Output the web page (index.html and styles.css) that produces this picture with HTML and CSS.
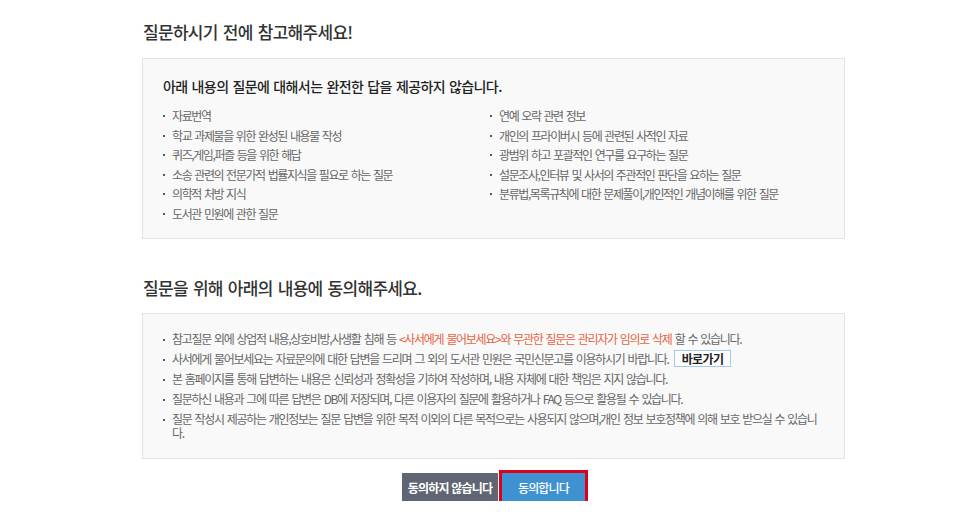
FILE: index.html
```html
<!DOCTYPE html>
<html lang="ko">
<head>
<meta charset="utf-8">
<title>질문하기 전 안내</title>
<link rel="stylesheet" href="styles.css">
</head>
<body>
<div class="wrap">
  <h2 class="title title-first">질문하시기 전에 참고해주세요!</h2>
  <div class="box box-notice">
    <h3 class="box-head">아래 내용의 질문에 대해서는 완전한 답을 제공하지 않습니다.</h3>
    <ul class="cols">
      <li class="item"><span>자료번역</span></li>
      <li class="item"><span>연예 오락 관련 정보</span></li>
      <li class="item"><span>학교 과제물을 위한 완성된 내용물 작성</span></li>
      <li class="item"><span>개인의 프라이버시 등에 관련된 사적인 자료</span></li>
      <li class="item"><span>퀴즈,게임,퍼즐 등을 위한 해답</span></li>
      <li class="item"><span>광범위 하고 포괄적인 연구를 요구하는 질문</span></li>
      <li class="item"><span>소송 관련의 전문가적 법률지식을 필요로 하는 질문</span></li>
      <li class="item"><span>설문조사,인터뷰 및 사서의 주관적인 판단을 요하는 질문</span></li>
      <li class="item"><span>의학적 처방 지식</span></li>
      <li class="item"><span>분류법,목록규칙에 대한 문제풀이,개인적인 개념이해를 위한 질문</span></li>
      <li class="item"><span>도서관 민원에 관한 질문</span></li>
    </ul>
  </div>

  <h2 class="title title-second">질문을 위해 아래의 내용에 동의해주세요.</h2>
  <div class="box box-agree">
    <ul class="rows">
      <li class="item"><span>참고질문 외에 상업적 내용,상호비방,사생활 침해 등 <em class="warn">&lt;사서에게 물어보세요&gt;와 무관한 질문은 관리자가 임의로 삭제</em> 할 수 있습니다.</span></li>
      <li class="item"><span>사서에게 물어보세요는 자료문의에 대한 답변을 드리며 그 외의 도서관 민원은 국민신문고를 이용하시기 바랍니다. <a class="go" href="#">바로가기</a></span></li>
      <li class="item"><span>본 홈페이지를 통해 답변하는 내용은 신뢰성과 정확성을 기하여 작성하며, 내용 자체에 대한 책임은 지지 않습니다.</span></li>
      <li class="item"><span>질문하신 내용과 그에 따른 답변은 DB에 저장되며, 다른 이용자의 질문에 활용하거나 FAQ 등으로 활용될 수 있습니다.</span></li>
      <li class="item"><span>질문 작성시 제공하는 개인정보는 질문 답변을 위한 목적 이외의 다른 목적으로는 사용되지 않으며,개인 정보 보호정책에 의해 보호 받으실 수 있습니다.</span></li>
    </ul>
  </div>

  <div class="actions">
    <button class="btn btn-no" type="button">동의하지 않습니다</button>
    <button class="btn btn-yes" type="button">동의합니다</button>
  </div>
</div>
</body>
</html>
```

FILE: styles.css
```css
* { box-sizing: border-box; }
html, body { margin: 0; padding: 0; background: #fff; }
body {
  font-family: "Noto Sans CJK KR", "Noto Sans", sans-serif;
  color: #666;
}
.wrap {
  width: 703px;
  margin-left: 142px;
  padding-top: 20px;
}
.title {
  margin: 0;
  font-size: 17px;
  line-height: 24px;
  font-weight: 500;
  color: #333;
  word-spacing: 1px;
  padding-left: 1px;
}
.title-first { letter-spacing: -0.7px; }
.title-second { margin-top: 37px; letter-spacing: -0.7px; }
.box {
  background: #f9f9f9;
  border: 1px solid #e3e3e3;
}
.box-notice {
  margin-top: 14px;
  padding: 17px 20px 15px 20px;
}
.box-head {
  margin: 0 0 10px 0;
  font-size: 14px;
  line-height: 20px;
  font-weight: 500;
  color: #222;
  letter-spacing: -0.6px;
  word-spacing: 0.7px;
}
ul { list-style: none; margin: 0; padding: 0; }
.cols {
  display: grid;
  grid-template-columns: 327px 1fr;
  grid-auto-flow: row;
}
.item {
  display: grid;
  grid-template-columns: 9px 1fr;
  font-size: 12px;
  letter-spacing: -1.4px;
  word-spacing: 1px;
  color: #666;
}
.item::before {
  content: "";
  width: 2px;
  height: 2px;
  background: #555;
  margin-top: 7px;
}
.cols .item { line-height: 19.5px; }
.cols .item::before { margin-top: 9px; }
.box-agree {
  margin-top: 13px;
  padding: 18px 26px 18px 20px;
}
.rows .item {
  line-height: 14px;
  letter-spacing: -1.3px;
}
.rows .item + .item { margin-top: 6px; }
.warn { font-style: normal; color: #e8623f; }
.go {
  display: inline-block;
  height: 17px;
  line-height: 15px;
  margin: -2px 0 -2px 2px;
  padding: 0 7px;
  border: 1px solid #a9c8e3;
  background: #fff;
  color: #222;
  font-weight: 700;
  text-decoration: none;
  letter-spacing: -0.6px;
  vertical-align: top;
}
.actions {
  display: flex;
  justify-content: center;
  gap: 4px;
  margin-top: 14px;
}
.btn {
  height: 28px;
  border: 0;
  margin: 0;
  padding: 0;
  font-family: inherit;
  font-size: 12px;
  font-weight: 700;
  color: #fff;
  letter-spacing: -0.8px;
  cursor: pointer;
}
.btn-no { width: 96px; background: #5f6573; }
.btn-yes {
  width: 83px;
  background: #3f92d2;
  font-weight: 500;
  outline: 3px solid #e0001b;
  outline-offset: 0;
}
```
